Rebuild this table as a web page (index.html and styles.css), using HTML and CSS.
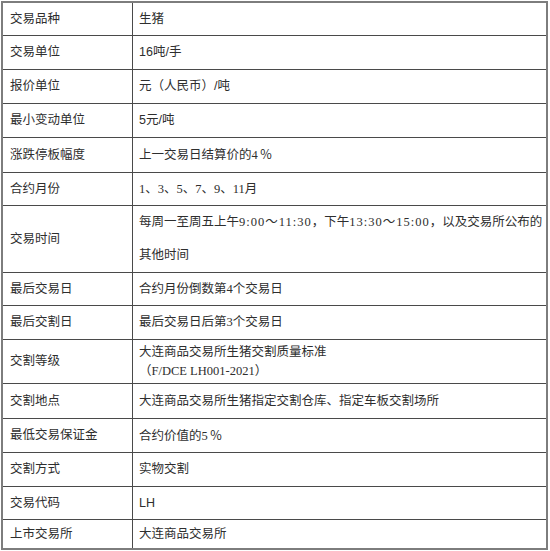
FILE: index.html
```html
<!DOCTYPE html>
<html lang="zh-CN">
<head>
<meta charset="utf-8">
<link rel="stylesheet" href="styles.css">
</head>
<body>
<table class="spec">
  <tr class="r33"><td class="k">交易品种</td><td class="v">生猪</td></tr>
  <tr><td class="k">交易单位</td><td class="v">16吨/手</td></tr>
  <tr><td class="k">报价单位</td><td class="v">元（人民币）/吨</td></tr>
  <tr><td class="k">最小变动单位</td><td class="v">5元/吨</td></tr>
  <tr class="r35"><td class="k">涨跌停板幅度</td><td class="v">上一交易日结算价的<span class="s">4</span><span class="pct">％</span></td></tr>
  <tr class="r33"><td class="k">合约月份</td><td class="v"><span class="s">1、3、5、7、9、11</span>月</td></tr>
  <tr class="r66"><td class="k">交易时间</td><td class="v tall">每周一至周五上午<span class="s">9:00～11:30</span>，下午<span class="s">13:30～15:00</span>，以及交易所公布的<br>其他时间</td></tr>
  <tr class="r33"><td class="k">最后交易日</td><td class="v">合约月份倒数第<span class="s">4</span>个交易日</td></tr>
  <tr><td class="k">最后交割日</td><td class="v">最后交易日后第<span class="s">3</span>个交易日</td></tr>
  <tr class="r44"><td class="k">交割等级</td><td class="v two">大连商品交易所生猪交割质量标准<br><span class="s">（F/DCE LH001-2021）</span></td></tr>
  <tr class="r35"><td class="k">交割地点</td><td class="v">大连商品交易所生猪指定交割仓库、指定车板交割场所</td></tr>
  <tr><td class="k">最低交易保证金</td><td class="v">合约价值的<span class="s">5</span><span class="pct">％</span></td></tr>
  <tr><td class="k">交割方式</td><td class="v">实物交割</td></tr>
  <tr class="r33"><td class="k">交易代码</td><td class="v">LH</td></tr>
  <tr class="r30"><td class="k">上市交易所</td><td class="v">大连商品交易所</td></tr>
</table>
</body>
</html>
```
FILE: styles.css
```css
html, body {
  margin: 0;
  padding: 0;
  background: #ffffff;
}
body {
  padding: 1px 0 0 1px;
  font-family: "Liberation Sans", "Noto Sans CJK SC", sans-serif;
  font-size: 12.5px;
  color: #2e2e2e;
}
.spec {
  border-collapse: collapse;
  border: 2px solid #7d7d7d;
  width: 547px;
  table-layout: fixed;
}
.spec tr {
  height: 34px;
}
.spec tr.r33 { height: 33px; }
.spec tr.r35 { height: 35px; }
.spec tr.r30 { height: 30px; }
.spec tr.r44 { height: 44px; }
.spec tr.r66 { height: 66px; }
.spec td {
  border: 1px solid #4a4a4a;
  padding: 0 0 0 6px;
  vertical-align: middle;
  line-height: 16px;
}
.spec td.k {
  width: 122px;
  padding-left: 7px;
}
.spec td.v {
  padding-left: 6px;
}
.spec td.tall {
  line-height: 33px;
}
.spec td.tall .s {
  letter-spacing: 1px;
}
.spec td.two {
  line-height: 19px;
  vertical-align: top;
  padding-top: 3px;
}
.s {
  font-family: "Liberation Serif", "Noto Sans CJK SC", serif;
}
.pct {
  font-family: "Noto Sans CJK SC", sans-serif;
  margin-left: 2px;
}
```
